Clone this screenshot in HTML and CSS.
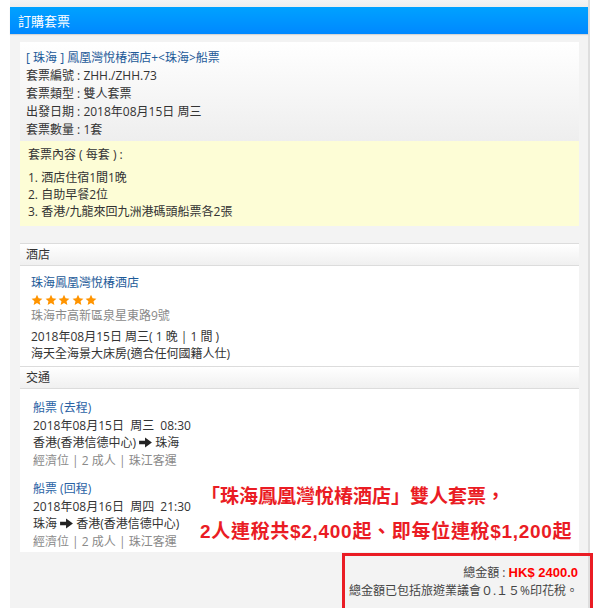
FILE: index.html
```html
<!DOCTYPE html>
<html lang="zh-Hant">
<head>
<meta charset="utf-8">
<title>訂購套票</title>
<link rel="stylesheet" href="styles.css">
</head>
<body>
<div class="page">
  <div class="panel">
    <div class="panel-head">訂購套票</div>
    <div class="panel-body">
      <div class="pkg">
        <div class="pkg-info">
          <div class="pkg-title">[ 珠海 ] 鳳凰灣悅椿酒店+&lt;珠海&gt;船票</div>
          <div>套票編號 : ZHH./ZHH.73</div>
          <div>套票類型 : 雙人套票</div>
          <div>出發日期 : 2018年08月15日 周三</div>
          <div>套票數量 : 1套</div>
        </div>
        <div class="pkg-content">
          <div class="pkg-content-title">套票內容 ( 每套 ) :</div>
          <ol class="pkg-list">
            <li>1. 酒店住宿1間1晚</li>
            <li>2. 自助早餐2位</li>
            <li>3. 香港/九龍來回九洲港碼頭船票各2張</li>
          </ol>
        </div>
      </div>

      <div class="detail">
        <div class="sec-head">酒店</div>
        <div class="hotel">
          <div class="hotel-name">珠海鳳凰灣悅椿酒店</div>
          <div class="stars">
            <svg viewBox="0 0 24 24"><path d="M12 1.5l3.2 7 7.6.8-5.7 5.1 1.6 7.5L12 18l-6.7 3.9 1.6-7.5L1.2 9.3l7.6-.8z"/></svg>
            <svg viewBox="0 0 24 24"><path d="M12 1.5l3.2 7 7.6.8-5.7 5.1 1.6 7.5L12 18l-6.7 3.9 1.6-7.5L1.2 9.3l7.6-.8z"/></svg>
            <svg viewBox="0 0 24 24"><path d="M12 1.5l3.2 7 7.6.8-5.7 5.1 1.6 7.5L12 18l-6.7 3.9 1.6-7.5L1.2 9.3l7.6-.8z"/></svg>
            <svg viewBox="0 0 24 24"><path d="M12 1.5l3.2 7 7.6.8-5.7 5.1 1.6 7.5L12 18l-6.7 3.9 1.6-7.5L1.2 9.3l7.6-.8z"/></svg>
            <svg viewBox="0 0 24 24"><path d="M12 1.5l3.2 7 7.6.8-5.7 5.1 1.6 7.5L12 18l-6.7 3.9 1.6-7.5L1.2 9.3l7.6-.8z"/></svg>
          </div>
          <div class="muted addr">珠海市高新區泉星東路9號</div>
          <div class="hotel-date">2018年08月15日 周三( 1 晚 | 1 間 )</div>
          <div class="hotel-room">海天全海景大床房(適合任何國籍人仕)</div>
        </div>
        <div class="sec-head">交通</div>
        <div class="transport">
          <div class="trip">
            <div class="trip-title">船票 (去程)</div>
            <div>2018年08月15日&nbsp; 周三&nbsp; 08:30</div>
            <div>香港(香港信德中心) <svg class="arrow" viewBox="0 0 14 12"><path d="M0 4h6.5V0.5L14 6l-7.5 5.5V8H0z"/></svg> 珠海</div>
            <div class="muted">經濟位 | 2 成人 | 珠江客運</div>
          </div>
          <div class="trip">
            <div class="trip-title">船票 (回程)</div>
            <div>2018年08月16日&nbsp; 周四&nbsp; 21:30</div>
            <div>珠海 <svg class="arrow" viewBox="0 0 14 12"><path d="M0 4h6.5V0.5L14 6l-7.5 5.5V8H0z"/></svg> 香港(香港信德中心)</div>
            <div class="muted">經濟位 | 2 成人 | 珠江客運</div>
          </div>
        </div>
      </div>

      <div class="summary">
        <div>總金額 : <span class="total">HK$ 2400.0</span></div>
        <div>總金額已包括旅遊業議會０.１５%印花稅。</div>
      </div>
    </div>
  </div>

  <div class="promo">
    <div class="promo-l1">「珠海鳳凰灣悅椿酒店」雙人套票，</div>
    <div class="promo-l2">2人連稅共$2,400起、即每位連稅$1,200起</div>
  </div>
  <div class="highlight"></div>
</div>
</body>
</html>
```

FILE: styles.css
```css
html, body {
  margin: 0;
  padding: 0;
  background: #ffffff;
}

body {
  font-family: "Open Sans", "Noto Sans CJK TC", sans-serif;
  font-size: 12px;
  color: #333333;
}

.page {
  position: relative;
  width: 608px;
  height: 608px;
  overflow: hidden;
}

.panel {
  margin-left: 10px;
  width: 578px;
  border-right: 2px solid #dedede;
  padding-top: 7px;
  background: linear-gradient(#f5f5f5, #eeeeee 7px, #f3f3f3 7px);
  min-height: 620px;
}

.panel-head {
  height: 27px;
  line-height: 28px;
  padding-left: 8px;
  color: #ffffff;
  font-size: 13px;
  background: linear-gradient(#00a2ff, #0088ff);
  box-shadow: 0 1px 1px rgba(0, 0, 0, 0.12);
}

.panel-body {
  padding: 8px 9px 0 10px;
}

.pkg {
  background: #ffffff;
}

.pkg-info {
  padding: 7px 6px 2px 6px;
  line-height: 18px;
  background: linear-gradient(#ffffff, #eeeeee);
}

.pkg-title {
  color: #1d5a98;
}

.pkg-content {
  background: #fdfdd6;
  padding: 5px 8px 6px 8px;
}

.pkg-content-title {
  line-height: 18px;
  margin-bottom: 5px;
}

.pkg-list {
  list-style: none;
  margin: 0;
  padding: 0;
  line-height: 17px;
}

.detail {
  margin-top: 17px;
  background: #ffffff;
}

.sec-head {
  height: 21px;
  line-height: 22px;
  padding-left: 6px;
  border-top: 1px solid #dcdcdc;
  border-bottom: 1px solid #dcdcdc;
  background: linear-gradient(#ffffff, #f0f0f0);
}

.hotel {
  padding: 8px 11px 4px 11px;
  line-height: 18px;
}

.hotel-name {
  color: #1d5a98;
}

.stars {
  display: flex;
  gap: 1.5px;
  height: 15px;
  align-items: center;
}

.stars svg {
  width: 12px;
  height: 12px;
  fill: #ff9400;
}

.addr {
  margin-bottom: 3px;
}

.hotel-date,
.hotel-room {
  line-height: 17px;
}

.muted {
  color: #8a8a8a;
}

.transport {
  padding: 10px 13px 2px 13px;
  line-height: 17.5px;
}

.trip + .trip {
  margin-top: 11px;
}

.trip-title {
  color: #2a62a4;
}

.arrow {
  width: 13px;
  height: 11px;
  fill: #222222;
  vertical-align: -1px;
}

.summary {
  padding: 12px 1px 0 0;
  text-align: right;
  line-height: 18px;
  color: #444444;
}

.total {
  color: #ff0000;
  font-weight: bold;
  font-size: 13px;
  font-family: "Liberation Sans", "Noto Sans CJK TC", sans-serif;
}

.promo {
  position: absolute;
  left: 200px;
  top: 484px;
  color: #ea1c24;
  font-weight: bold;
  font-size: 19px;
  font-family: "Liberation Sans", "Noto Sans CJK TC", sans-serif;
  line-height: 26px;
}

.promo-l1 {
  padding-left: 1px;
}

.promo-l2 {
  margin-top: 9px;
  letter-spacing: 0.7px;
}

.highlight {
  position: absolute;
  left: 342px;
  top: 553px;
  width: 245px;
  height: 52px;
  border: 3px solid #ea1c24;
}
```
